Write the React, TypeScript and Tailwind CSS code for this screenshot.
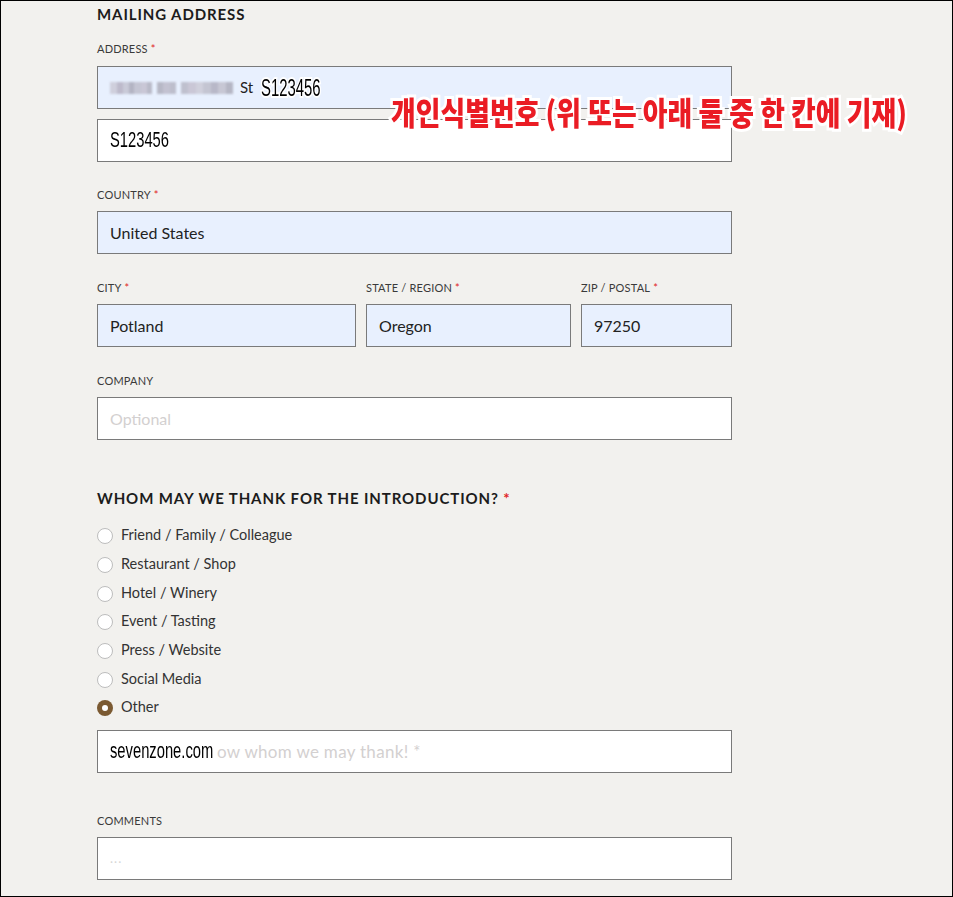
import React from "react";

const body = "font-['Lato','Noto_Sans',sans-serif]";

function Label({ text, req }: { text: string; req?: boolean }) {
  return (
    <div className={`${body} text-[11px] leading-[14px] text-[#3a3a3a] tracking-[0.2px]`}>
      {text}
      {req && <span className="text-[#e02424] ml-[3px]">*</span>}
    </div>
  );
}

function Box({ blue, className = "", children }: { blue?: boolean; className?: string; children?: React.ReactNode }) {
  return (
    <div
      className={`relative h-[43px] border border-[#7a7a7a] flex items-center pl-[12px] ${blue ? "bg-[#e8f0fe]" : "bg-white"} ${className}`}
    >
      {children}
    </div>
  );
}

function Narrow({ children, className = "" }: { children: React.ReactNode; className?: string }) {
  return (
    <span
      className={`inline-block origin-left scale-x-[0.67] font-['Liberation_Sans',Arial,sans-serif] text-[22px] leading-[24px] text-black whitespace-nowrap ${className}`}
    >
      {children}
    </span>
  );
}

function Radio({ label, checked }: { label: string; checked?: boolean }) {
  return (
    <div className="flex items-center h-[28.7px]">
      {checked ? (
        <span className="w-[16px] h-[16px] rounded-full bg-[#7b5a32] flex items-center justify-center">
          <span className="w-[6px] h-[6px] rounded-full bg-white" />
        </span>
      ) : (
        <span className="w-[16px] h-[16px] rounded-full bg-white border border-[#bdbdbd]" />
      )}
      <span className={`${body} ml-[8px] text-[14.5px] text-[#333] leading-[18px] -mt-[2px]`}>{label}</span>
    </div>
  );
}

const blocks: [number, string][] = [
  [7, "#cfcfdc"], [6, "#bdbacb"], [6, "#c9cad8"], [5, "#b3b4c3"], [7, "#c4c5d3"], [6, "#c9c7d6"], [5, "#b9bac8"],
];
const blocks2: [number, string][] = [[6, "#b7b8c6"], [7, "#c3c2d1"], [6, "#bdbecc"]];
const blocks3: [number, string][] = [
  [7, "#bfc0ce"], [8, "#cac7d6"], [7, "#d0d0dc"], [8, "#c4c5d2"], [7, "#b8b8c8"], [8, "#c7c7d4"], [7, "#b5b6c4"],
];

export default function App() {
  return (
    <div className="relative w-[953px] h-[897px] border border-black bg-[#f2f1ee] overflow-hidden">
      <div className="w-[635px] ml-[96px] pt-[3px] flex flex-col">
        <div className={`${body} font-bold text-[15px] leading-[20px] tracking-[0.9px] text-[#1c1c1c]`}>MAILING ADDRESS</div>
        <div className="mt-[18px]"><Label text="ADDRESS" req /></div>
        <Box blue className="mt-[10px]">
          <div className="flex items-center blur-[0.8px] mt-[1px]">
            {blocks.map(([w, c], i) => (
              <span key={i} style={{ width: w, background: c }} className="h-[12px]" />
            ))}
            <span className="w-[5px]" />
            {blocks2.map(([w, c], i) => (
              <span key={i} style={{ width: w, background: c }} className="h-[12px]" />
            ))}
            <span className="w-[5px]" />
            {blocks3.map(([w, c], i) => (
              <span key={i} style={{ width: w, background: c }} className="h-[12px]" />
            ))}
          </div>
          <span className={`${body} ml-[7px] text-[15px] text-[#222]`}>St</span>
          <span className="relative ml-[8px] inline-block w-[62px] h-[28px]">
            <span className="absolute left-0 top-[1px] inline-block origin-left scale-x-[0.62] font-['Liberation_Sans',Arial,sans-serif] text-[24px] leading-[26px] text-black [paint-order:stroke_fill] [-webkit-text-stroke:4px_white]">
              S123456
            </span>
          </span>
        </Box>
        <Box className="mt-[10px]">
          <Narrow className="-mt-[2px]">S123456</Narrow>
        </Box>

        <div className="mt-[26px]"><Label text="COUNTRY" req /></div>
        <Box blue className="mt-[9px]">
          <span className={`${body} text-[16px] text-[#222]`}>United States</span>
        </Box>

        <div className="mt-[27px] flex gap-[10px]">
          <div className="w-[259px] flex flex-col">
            <Label text="CITY" req />
            <Box blue className="mt-[9px]">
              <span className={`${body} text-[16px] text-[#222]`}>Potland</span>
            </Box>
          </div>
          <div className="w-[205px] flex flex-col">
            <Label text="STATE / REGION" req />
            <Box blue className="mt-[9px]">
              <span className={`${body} text-[16px] text-[#222]`}>Oregon</span>
            </Box>
          </div>
          <div className="w-[151px] flex flex-col">
            <Label text="ZIP / POSTAL" req />
            <Box blue className="mt-[9px]">
              <span className={`${body} text-[16px] text-[#222]`}>97250</span>
            </Box>
          </div>
        </div>

        <div className="mt-[27px]"><Label text="COMPANY" /></div>
        <Box className="mt-[9px]">
          <span className={`${body} text-[16px] text-[#d3d0d0]`}>Optional</span>
        </Box>

        <div className={`mt-[48px] ${body} font-bold text-[15px] leading-[20px] tracking-[0.9px] text-[#1c1c1c]`}>
          WHOM MAY WE THANK FOR THE INTRODUCTION? <span className="text-[#e02424]">*</span>
        </div>
        <div className="mt-[14px] flex flex-col">
          <Radio label="Friend / Family / Colleague" />
          <Radio label="Restaurant / Shop" />
          <Radio label="Hotel / Winery" />
          <Radio label="Event / Tasting" />
          <Radio label="Press / Website" />
          <Radio label="Social Media" />
          <Radio label="Other" checked />
        </div>
        <Box className="mt-[7px]">
          <span className="w-[107px] h-[24px] -mt-[1px] shrink-0 overflow-visible">
            <Narrow>sevenzone.com</Narrow>
          </span>
          <span className={`${body} text-[17px] tracking-[0.3px] text-[#d3d0d0] whitespace-nowrap`}>ow whom we may thank! *</span>
        </Box>

        <div className="mt-[41px]"><Label text="COMMENTS" /></div>
        <Box className="mt-[9px]">
          <span className={`${body} text-[13px] text-[#d6d6d6] tracking-[1px]`}>...</span>
        </Box>
      </div>

      <div className="absolute left-[390px] top-[90px]">
        <span className="inline-block origin-left scale-x-[0.84] whitespace-nowrap font-['Noto_Sans_CJK_KR',sans-serif] font-black text-[32px] leading-[40px] text-[#ea1c24] [paint-order:stroke_fill] [-webkit-text-stroke:6px_white]">
          개인식별번호 (위 또는 아래 둘 중 한 칸에 기재)
        </span>
      </div>
    </div>
  );
}
